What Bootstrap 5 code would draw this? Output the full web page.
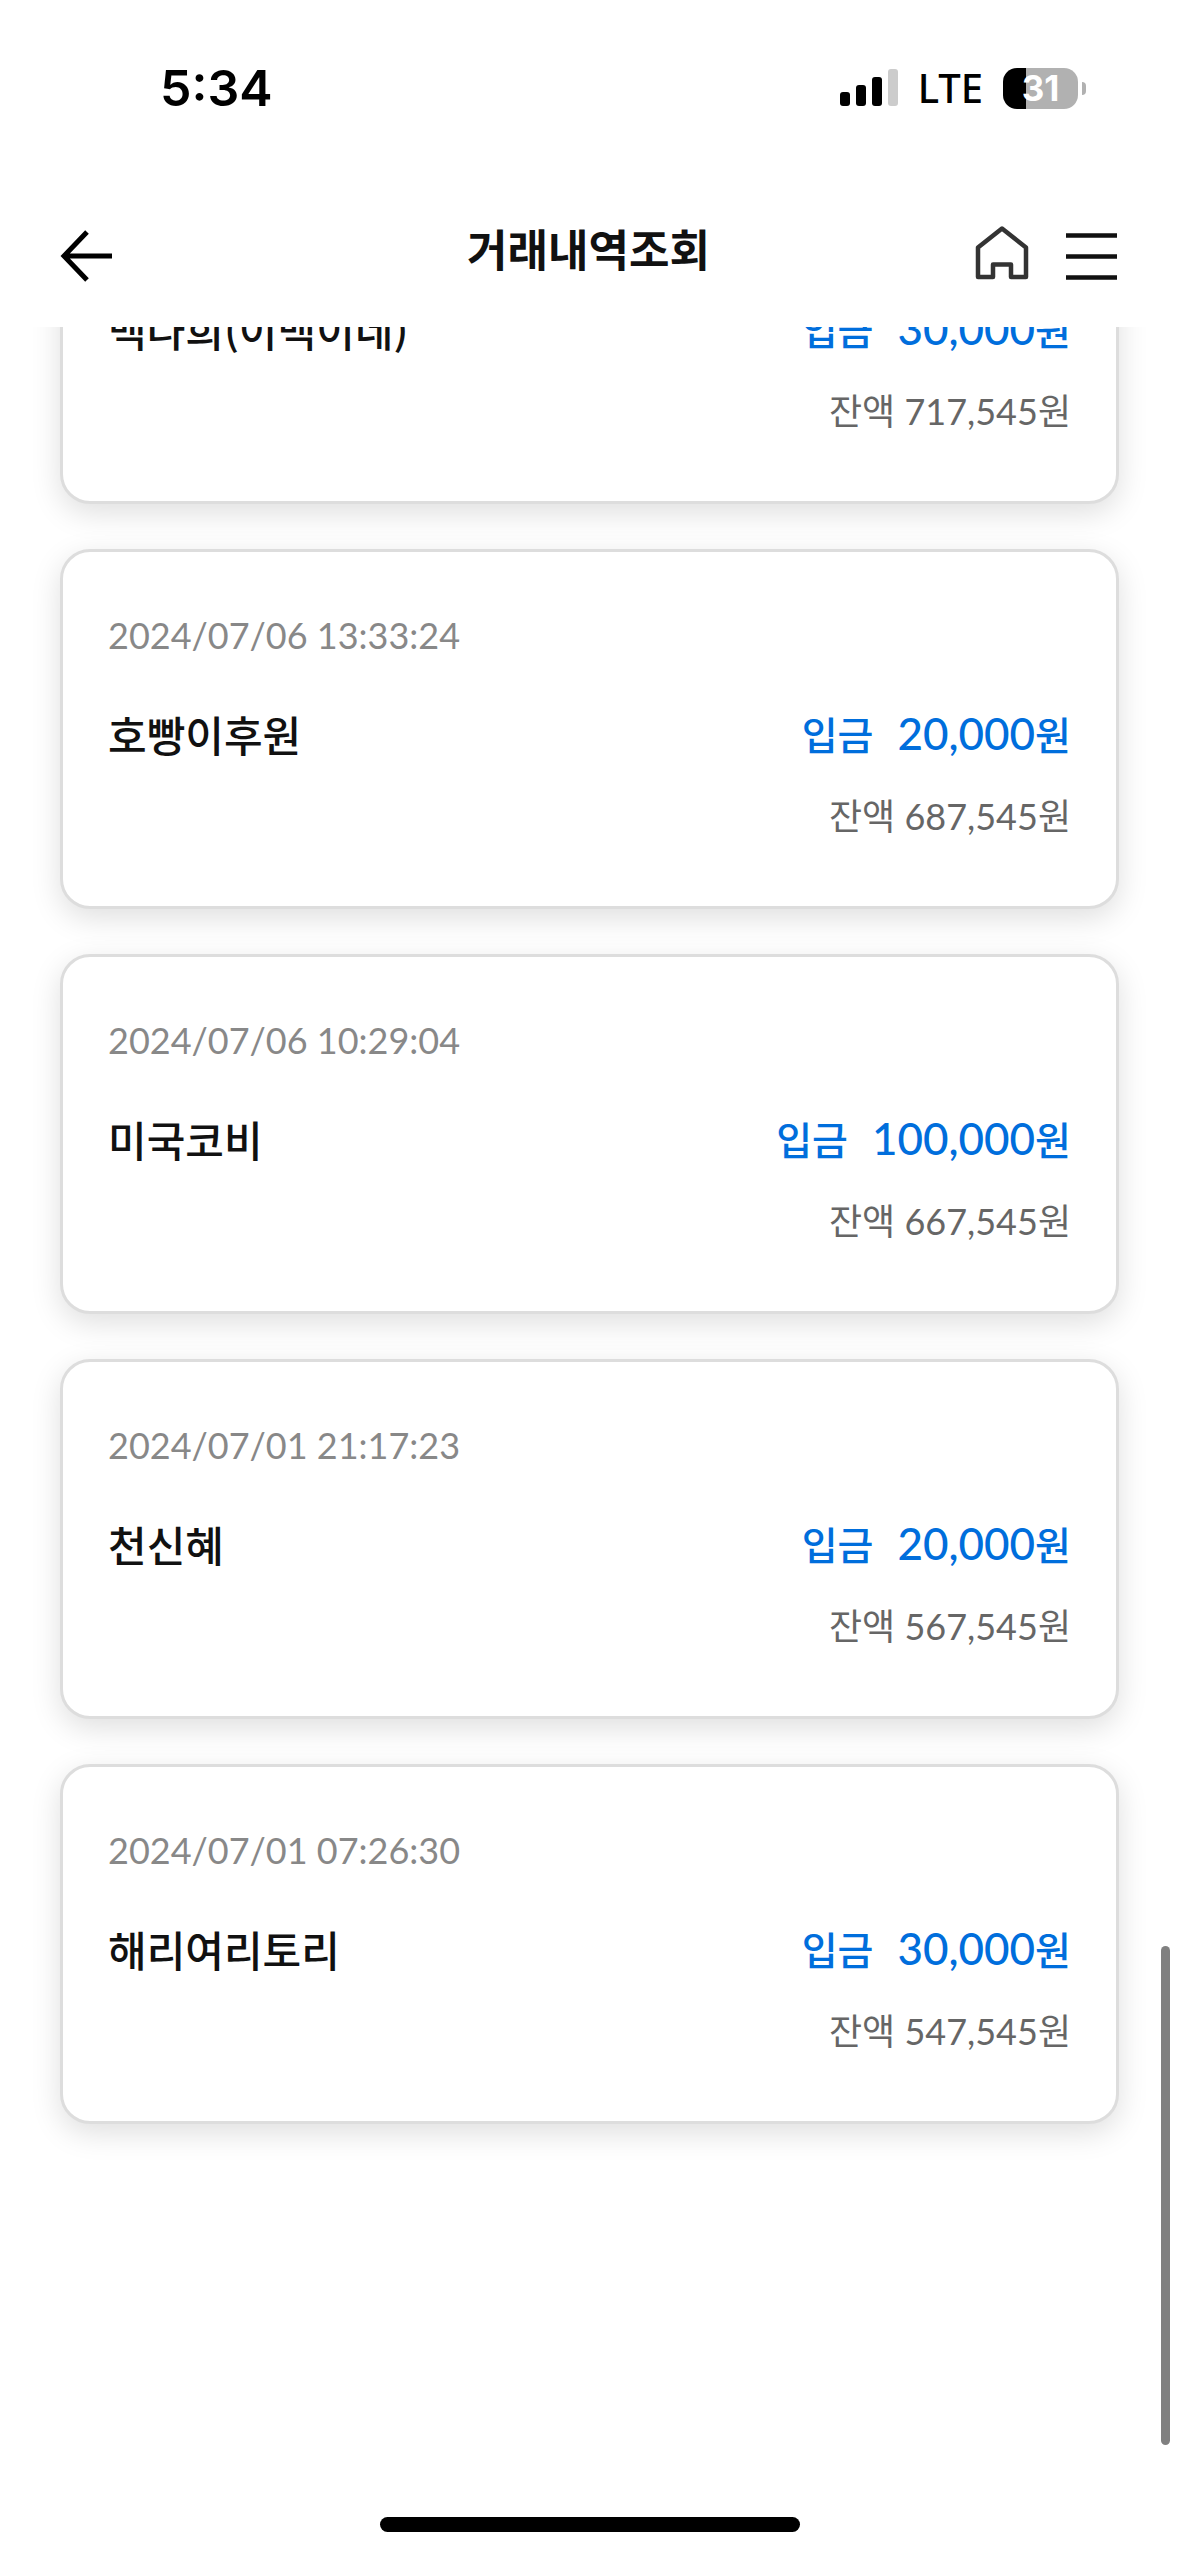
<!DOCTYPE html>
<html lang="ko">
<head>
<meta charset="utf-8">
<meta name="viewport" content="width=device-width, initial-scale=1">
<title>거래내역조회</title>
<link href="https://cdn.jsdelivr.net/npm/bootstrap@5.3.0/dist/css/bootstrap.min.css" rel="stylesheet">
<style>
  body { font-family: "Noto Sans CJK KR", sans-serif; color: #111; background: #fff; }
  .status-bar { height: 176px; padding: 0 93px 0 160px; }
  .status-time { font: 600 50px/60px Inter, sans-serif; color: #000; }
  .status-net { font: 500 40px/48px "Noto Sans", sans-serif; color: #000; margin: 0 20px; }
  .battery-body { width: 75px; height: 41px; border-radius: 14px; background: linear-gradient(90deg, #000 23px, #b1b1b1 23px); font: 700 35px/41px Inter, sans-serif; }
  .battery-tip { width: 4px; height: 13px; border-radius: 0 4px 4px 0; background: #b1b1b1; }
  .title-bar { height: 151px; padding: 0 62px 0 60px; }
  .title-bar .side { flex: 1 1 0; padding-top: 6px; }
  .title-bar .tools { gap: 37px; }
  .title-text { font-size: 44px; line-height: 60px; font-weight: 700; padding-bottom: 8px; }
  .title-bar svg { display: block; overflow: visible; }
  .viewport-list { min-height: 0; }
  .scrolled-list { margin-top: -183px; padding: 0 60px; gap: 45px; }
  .tx-card { border: 3px solid #ddd; border-radius: 30px; padding: 45px 45px 51px; box-shadow: 0 9px 30px rgba(0,0,0,.13); }
  .tx-date { font: 400 36px/76px Lato, sans-serif; color: #888; margin-bottom: 20px; }
  .tx-name { font-size: 42px; line-height: 81px; font-weight: 500; }
  .tx-amount { font-family: Lato, "Noto Sans CJK KR", sans-serif; font-size: 39px; line-height: 77px; padding-top: 4px; font-weight: 500; color: #006edc; }
  .tx-figure { font-size: 44px; line-height: 44px; margin-left: 24px; }
  .tx-balance { font: 400 36px/78px Lato, "Noto Sans CJK KR", sans-serif; padding-top: 3px; color: #666; }
  .scroll-thumb { position: fixed; right: 9px; top: 1946px; width: 9px; height: 499px; border-radius: 5px; background: #808080; }
  .home-bar { width: 420px; height: 15px; border-radius: 8px; background: #000; margin-bottom: 24px; }
</style>
</head>
<body>
<div class="vh-100 d-flex flex-column overflow-hidden">
  <header class="bg-white position-relative z-1">
    <div class="status-bar d-flex align-items-center justify-content-between">
      <div class="status-time">5:34</div>
      <div class="d-flex align-items-center">
        <svg width="58" height="38" viewBox="0 0 58 38" aria-hidden="true">
          <rect x="0" y="23" width="10" height="14" rx="3"/>
          <rect x="16" y="16" width="10" height="21" rx="3"/>
          <rect x="32" y="8" width="10" height="29" rx="3"/>
          <rect x="48" y="0" width="10" height="37" rx="3" fill="#ccc"/>
        </svg>
        <span class="status-net">LTE</span>
        <span class="battery-body text-white text-center">31</span>
        <span class="battery-tip ms-1"></span>
      </div>
    </div>
    <nav class="title-bar d-flex align-items-center" aria-label="상단 메뉴">
      <div class="side">
        <button type="button" class="btn p-0 border-0" aria-label="뒤로">
          <svg width="54" height="56" viewBox="0 0 54 56" fill="none" stroke="#000" stroke-width="5"><path d="M52 29H4M27 5L4 29l23 24"/></svg>
        </button>
      </div>
      <h1 class="title-text m-0">거래내역조회</h1>
      <div class="side tools d-flex justify-content-end align-items-center">
        <a href="#" aria-label="홈">
          <svg width="54" height="56" viewBox="0 0 54 56" fill="none" stroke="#333" stroke-width="4.5" stroke-linejoin="round"><path d="M3 50V20.500L27 1.500l24 19V50H36V37.500H18V50z"/></svg>
        </a>
        <button type="button" class="btn p-0 border-0" aria-label="전체 메뉴">
          <svg width="51" height="56" viewBox="0 0 51 56" fill="none" stroke="#111" stroke-width="4.500"><path d="M0 8.500h51M0 29.500h51M0 50.500h51"/></svg>
        </button>
      </div>
    </nav>
  </header>

  <main class="viewport-list flex-grow-1 overflow-hidden">
    <div class="scrolled-list d-flex flex-column">
      <article class="tx-card bg-white">
        <div class="tx-date">2024/07/06 13:35:10</div>
        <div class="d-flex justify-content-between"><span class="tx-name">백나희(이백이네)</span><span class="tx-amount">입금<span class="tx-figure">30,000</span>원</span></div>
        <div class="tx-balance text-end">잔액 717,545원</div>
      </article>
      <article class="tx-card bg-white">
        <div class="tx-date">2024/07/06 13:33:24</div>
        <div class="d-flex justify-content-between"><span class="tx-name">호빵이후원</span><span class="tx-amount">입금<span class="tx-figure">20,000</span>원</span></div>
        <div class="tx-balance text-end">잔액 687,545원</div>
      </article>
      <article class="tx-card bg-white">
        <div class="tx-date">2024/07/06 10:29:04</div>
        <div class="d-flex justify-content-between"><span class="tx-name">미국코비</span><span class="tx-amount">입금<span class="tx-figure">100,000</span>원</span></div>
        <div class="tx-balance text-end">잔액 667,545원</div>
      </article>
      <article class="tx-card bg-white">
        <div class="tx-date">2024/07/01 21:17:23</div>
        <div class="d-flex justify-content-between"><span class="tx-name">천신혜</span><span class="tx-amount">입금<span class="tx-figure">20,000</span>원</span></div>
        <div class="tx-balance text-end">잔액 567,545원</div>
      </article>
      <article class="tx-card bg-white">
        <div class="tx-date">2024/07/01 07:26:30</div>
        <div class="d-flex justify-content-between"><span class="tx-name">해리여리토리</span><span class="tx-amount">입금<span class="tx-figure">30,000</span>원</span></div>
        <div class="tx-balance text-end">잔액 547,545원</div>
      </article>
    </div>
  </main>
  <footer class="d-flex justify-content-center"><div class="home-bar"></div></footer>
</div>
<div class="scroll-thumb"></div>
<script src="https://cdn.jsdelivr.net/npm/bootstrap@5.3.0/dist/js/bootstrap.bundle.min.js"></script>
</body>
</html>
